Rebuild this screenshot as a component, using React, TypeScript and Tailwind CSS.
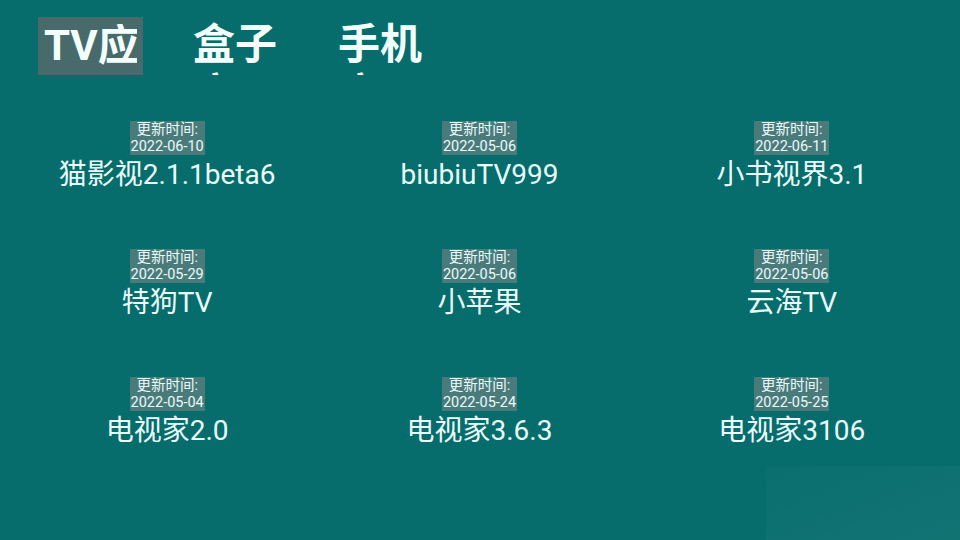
const APPS = [
  { name: "猫影视2.1.1beta6", date: "2022-06-10" },
  { name: "biubiuTV999", date: "2022-05-06" },
  { name: "小书视界3.1", date: "2022-06-11" },
  { name: "特狗TV", date: "2022-05-29" },
  { name: "小苹果", date: "2022-05-06" },
  { name: "云海TV", date: "2022-05-06" },
  { name: "电视家2.0", date: "2022-05-04" },
  { name: "电视家3.6.3", date: "2022-05-24" },
  { name: "电视家3106", date: "2022-05-25" },
];

function AppCell({ name, date }: { name: string; date: string }) {
  return (
    <div className="flex h-[128px] flex-col items-center">
      <div className="bg-[#4b7a7b] px-[1px] text-center text-[14.5px] leading-[17px] text-[#e8fbfa]">
        <div>更新时间:</div>
        <div>{date}</div>
      </div>
      <div className="mt-[3px] whitespace-nowrap text-[28px] leading-[34px] text-[#eafcfb]">{name}</div>
    </div>
  );
}

export default function App() {
  return (
    <div className="relative h-[540px] w-[960px] overflow-hidden bg-[#066c6c] font-['Roboto','Noto_Sans_CJK_SC',sans-serif]">
      <div className="flex pl-[38px] pt-[17px] text-[42px] font-bold text-[#f2fffd]">
        <div className="h-[58px] w-[105px] bg-[#496a6b] px-[6px] pt-[7px] leading-[44px]">
          <div className="w-[93px] overflow-hidden whitespace-nowrap">TV应用</div>
        </div>
        <div className="ml-[44px] h-[58px] w-[96px] overflow-hidden px-[6px] pt-[3px] leading-[50px]">
          <div className="whitespace-nowrap">盒子</div>
          <div className="whitespace-nowrap">应用</div>
        </div>
        <div className="ml-[49px] h-[58px] w-[96px] overflow-hidden px-[6px] pt-[3px] leading-[50px]">
          <div className="whitespace-nowrap">手机</div>
          <div className="whitespace-nowrap">应用</div>
        </div>
      </div>

      <div className="mt-[46px] grid grid-cols-3 pl-[11px] pr-[12px]">
        {APPS.map((a) => (
          <AppCell key={a.name} name={a.name} date={a.date} />
        ))}
      </div>

      <div className="absolute bottom-0 right-0 h-[74px] w-[194px] bg-gradient-to-br from-white/[0.02] to-white/[0.05]" />
    </div>
  );
}
